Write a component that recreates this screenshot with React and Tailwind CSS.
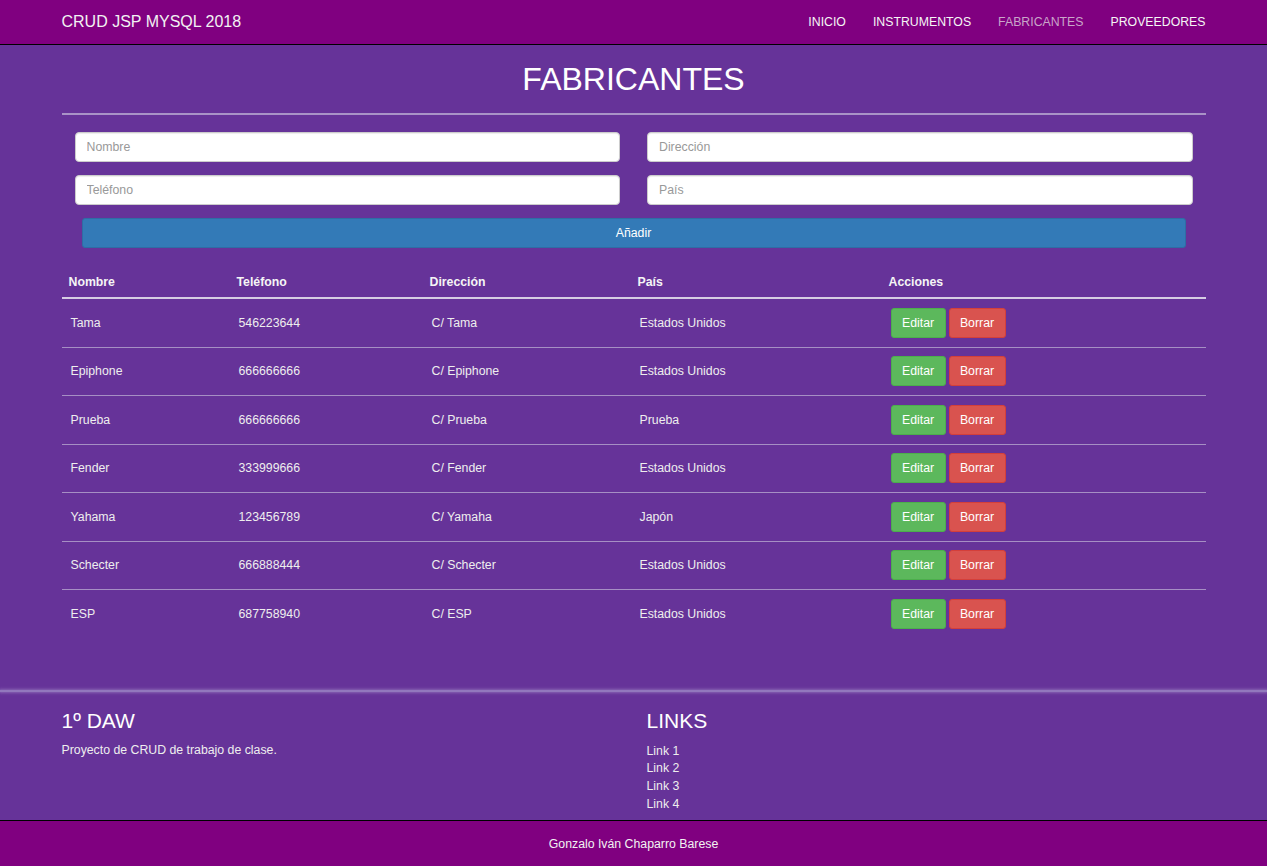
import React from 'react';

const rows = [
  { nombre: 'Tama', tel: '546223644', dir: 'C/ Tama', pais: 'Estados Unidos' },
  { nombre: 'Epiphone', tel: '666666666', dir: 'C/ Epiphone', pais: 'Estados Unidos' },
  { nombre: 'Prueba', tel: '666666666', dir: 'C/ Prueba', pais: 'Prueba' },
  { nombre: 'Fender', tel: '333999666', dir: 'C/ Fender', pais: 'Estados Unidos' },
  { nombre: 'Yahama', tel: '123456789', dir: 'C/ Yamaha', pais: 'Japón' },
  { nombre: 'Schecter', tel: '666888444', dir: 'C/ Schecter', pais: 'Estados Unidos' },
  { nombre: 'ESP', tel: '687758940', dir: 'C/ ESP', pais: 'Estados Unidos' },
];

const navItems = ['INICIO', 'INSTRUMENTOS', 'FABRICANTES', 'PROVEEDORES'];

function Field({ placeholder }) {
  return (
    <input
      type="text"
      placeholder={placeholder}
      className="h-[30px] w-full rounded-[4px] border border-[#cccccc] bg-white px-[11px] text-[12.3px] text-[#555] placeholder:text-[#999] shadow-[inset_0_1px_1px_rgba(0,0,0,0.075)] outline-none"
    />
  );
}

export default function App() {
  return (
    <div className="min-h-[866px] bg-[#663399] font-['Liberation_Sans',Arial,sans-serif] text-[12.3px] text-[#eeeeee]">
      {/* Navbar */}
      <nav className="h-[45px] border-b border-black bg-[#800080]">
        <div className="mx-auto flex h-[44px] w-[1144px] items-center justify-between">
          <span className="text-[16px] text-[#f2f2f2]">CRUD JSP MYSQL 2018</span>
          <ul className="flex items-center">
            {navItems.map((item) => (
              <li
                key={item}
                className={`px-[13.5px] last:pr-0 text-[12.3px] ${item === 'FABRICANTES' ? 'text-[#c9a5c9]' : 'text-[#f5f5f5]'}`}
              >
                {item}
              </li>
            ))}
          </ul>
        </div>
      </nav>

      {/* Main */}
      <main className="mx-auto w-[1144px] pb-[52px]">
        <h1 className="mt-[16px] text-center text-[32px] leading-[36px] text-white">FABRICANTES</h1>
        <div className="mt-[16px] h-[2px] bg-[#a993c7]"></div>

        <form className="mt-[17px]">
          <div className="grid grid-cols-2 gap-x-[27px] gap-y-[13px] px-[13px]">
            <Field placeholder="Nombre" />
            <Field placeholder="Dirección" />
            <Field placeholder="Teléfono" />
            <Field placeholder="País" />
          </div>
          <div className="mt-[13px] px-[20px]">
            <button
              type="button"
              className="h-[30px] w-full rounded-[3px] border border-[#2e6da4] bg-[#337ab7] text-[12.3px] text-white"
            >
              Añadir
            </button>
          </div>
        </form>

        <table className="mt-[14px] w-full table-fixed border-collapse text-left">
          <colgroup>
            <col className="w-[168px]" />
            <col className="w-[193px]" />
            <col className="w-[208px]" />
            <col className="w-[251px]" />
            <col />
          </colgroup>
          <thead>
            <tr className="border-b-2 border-[#d6cde3]">
              {['Nombre', 'Teléfono', 'Dirección', 'País', 'Acciones'].map((h) => (
                <th key={h} className="pl-[7px] pt-[10px] pb-[5px] text-[12.3px] font-bold leading-[20px] text-[#f5f5f5]">
                  {h}
                </th>
              ))}
            </tr>
          </thead>
          <tbody>
            {rows.map((r, i) => (
              <tr key={i} className="border-b border-[#a68fc4] last:border-b-0">
                <td className="py-[8.75px] pl-[9px]">{r.nombre}</td>
                <td className="py-[8.75px] pl-[9px]">{r.tel}</td>
                <td className="py-[8.75px] pl-[9px]">{r.dir}</td>
                <td className="py-[8.75px] pl-[9px]">{r.pais}</td>
                <td className="py-[8.75px] pl-[9px]">
                  <div className="flex gap-[3px]">
                    <button className="h-[30px] w-[55px] rounded-[3px] border border-[#4cae4c] bg-[#5cb85c] text-[12.3px] text-white">
                      Editar
                    </button>
                    <button className="h-[30px] w-[57px] rounded-[3px] border border-[#d43f3a] bg-[#d9534f] text-[12.3px] text-white">
                      Borrar
                    </button>
                  </div>
                </td>
              </tr>
            ))}
          </tbody>
        </table>
      </main>

      {/* Footer */}
      <footer>
        <div className="h-[2px] bg-[#9278bd] shadow-[0_0_3px_1px_rgba(160,135,200,0.6)]"></div>
        <div className="mx-auto grid w-[1144px] grid-cols-2 pt-[17px] pb-[7px]">
          <div>
            <h3 className="text-[21px] leading-[24px] text-white">1º DAW</h3>
            <p className="mt-[9px] leading-[17.7px]">Proyecto de CRUD de trabajo de clase.</p>
          </div>
          <div className="pl-[13px]">
            <h3 className="text-[21px] leading-[24px] text-white">LINKS</h3>
            <ul className="mt-[10px] leading-[17.7px]">
              <li>Link 1</li>
              <li>Link 2</li>
              <li>Link 3</li>
              <li>Link 4</li>
            </ul>
          </div>
        </div>
        <div className="flex h-[46px] items-center justify-center border-t border-black bg-[#800080] text-[12.3px] text-[#f2f2f2]">
          Gonzalo Iván Chaparro Barese
        </div>
      </footer>
    </div>
  );
}
